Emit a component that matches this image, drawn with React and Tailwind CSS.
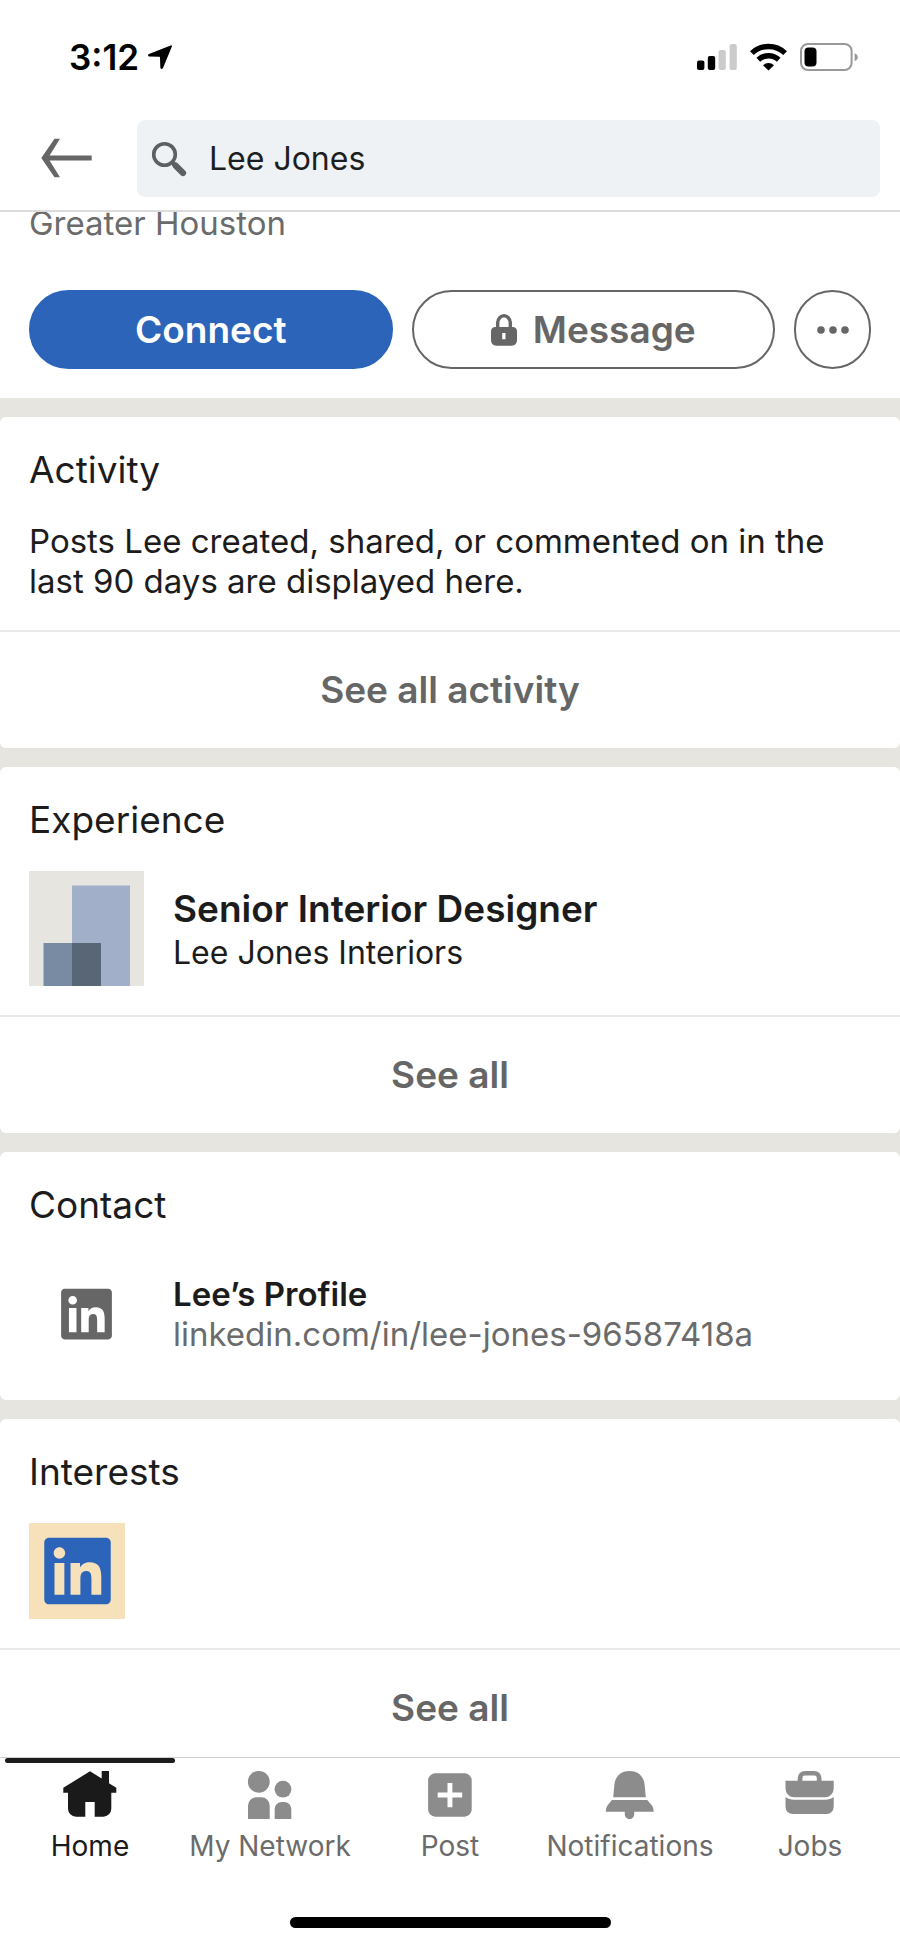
import React, { useState } from 'react';
import { FaLinkedin } from 'react-icons/fa';

const StatusBar = () => (
  <div className="h-[114px] flex items-center justify-between pl-[69px] pr-[42px] text-black">
    <div className="flex items-center gap-[9px]">
      <span className="text-[35px] leading-10 font-semibold">3:12</span>
      <svg className="w-6 h-6" viewBox="0 0 24 24" fill="currentColor">
        <path d="M22.6 0.4C23.6 0 24.3 0.8 23.8 1.8L15 23C14.4 24.4 12.4 24.2 12.3 22.6L12 12.4Q12 11.7 11.3 11.7L1.5 11.4C-0.2 11.3-0.5 9.5 1 8.9Z" />
      </svg>
    </div>
    <div className="flex items-center">
      <svg className="w-10 h-7" viewBox="0 0 40 28">
        <rect x="0" y="17.5" width="7.4" height="9.5" rx="2" />
        <rect x="10.8" y="13" width="7.4" height="14" rx="2" />
        <rect x="21.6" y="7" width="7.2" height="20" rx="2" fill="#cbcbcb" />
        <rect x="32.6" y="1" width="7.2" height="26" rx="2" fill="#cbcbcb" />
      </svg>
      <svg className="w-[37px] h-7 ml-[13px]" viewBox="0 0 37 28">
        <g fill="none" stroke="#000" strokeWidth="5.4">
          <path d="M1.9 10.1A24 24 0 0 1 35.1 10.1" />
          <path d="M8.3 16.7A15 15 0 0 1 28.7 16.7" />
        </g>
        <path d="M18.5 27.6L13 22.2A8 8 0 0 1 24 22.2Z" />
      </svg>
      <svg className="w-[58px] h-7 ml-[13px]" viewBox="0 0 58 28">
        <rect x="1" y="1" width="50.6" height="26" rx="7" fill="none" stroke="#999" strokeWidth="2" />
        <rect x="4.5" y="4.5" width="12" height="19" rx="4" />
        <path d="M54.6 10.3C58.8 11.5 58.8 17 54.6 18Z" fill="#999" />
      </svg>
    </div>
  </div>
);

const Header = () => {
  const [query, setQuery] = useState('Lee Jones');

  return (
    <header className="border-b-2 border-[#dcdcdc] bg-white">
      <StatusBar />
      <div className="flex items-center pt-[6px] pb-[13px] pl-[41px] pr-5">
        <button type="button" aria-label="Back" className="mr-[45px] text-[#666]">
          <svg className="w-[51px] h-[42px]" viewBox="0 0 51 42" fill="currentColor">
            <path d="M13.5 0.7H19L8.6 17.5H50.7V22.4H8.6L19 39.2H13.5L0.3 20Z" />
          </svg>
        </button>
        <div className="flex-1 h-[77px] flex items-center bg-[#eef2f5] rounded-lg pl-[14px]">
          <svg className="w-9 h-9 shrink-0" viewBox="0 0 36 36" fill="none" stroke="#5c6063">
            <circle cx="13.5" cy="13.5" r="10.8" strokeWidth="3.6" />
            <path d="M21.5 21.5L24 24" strokeWidth="4" />
            <path d="M24.5 24.5L32 32" strokeWidth="6.2" strokeLinecap="round" />
          </svg>
          <input
            type="text"
            aria-label="Search"
            value={query}
            onChange={(e) => setQuery(e.target.value)}
            className="flex-1 min-w-0 ml-[22px] bg-transparent text-[32px] leading-10 text-[#1c1f21] outline-none"
          />
        </div>
      </div>
    </header>
  );
};

const Card = ({ title, action, children }) => (
  <section className="bg-white rounded-md mt-[19px]">
    <div className="p-[29px]">
      <h2 className="text-[37px] leading-[48px] mb-[27px]">{title}</h2>
      {children}
    </div>
    {action && (
      <button
        type="button"
        className="w-full h-[118px] border-t-2 border-[#e9e9e9] text-[37px] leading-[48px] font-semibold text-[#666]"
      >
        {action}
      </button>
    )}
  </section>
);

const HomeIcon = () => (
  <path d="M29 5.3L40.7 12.6V5H48V17.2L55.3 21.8V26.8H50.3V42.7A8 8 0 0 1 42.3 50.7H33.7V36H24.3V50.7H15A8 8 0 0 1 7 42.7V26.8H2.3V21.8Z" />
);

const NetworkIcon = () => (
  <>
    <circle cx="17.8" cy="15.8" r="10.9" />
    <path d="M7 53V39.5A8.2 8.2 0 0 1 15.2 31.3H20.5A8.2 8.2 0 0 1 28.7 39.5V53Z" />
    <circle cx="42" cy="23.2" r="8.4" />
    <path d="M33.7 53V43A7 7 0 0 1 40.7 36H43.3A7 7 0 0 1 50.3 43V53Z" />
  </>
);

const PostIcon = () => (
  <path
    fillRule="evenodd"
    d="M14.3 7.3H43.5A7.2 7.2 0 0 1 50.7 14.5V43.5A7.2 7.2 0 0 1 43.5 50.7H14.3A7.2 7.2 0 0 1 7.1 43.5V14.5A7.2 7.2 0 0 1 14.3 7.3ZM26.5 17V26.6H16.7V31.6H26.5V41.2H31.4V31.6H41.2V26.6H31.4V17Z"
  />
);

const BellIcon = () => (
  <>
    <path d="M12.2 31.3L13.4 18.5C14.3 9.8 20.4 5 28.5 5S42.7 9.8 43.6 18.5L44.8 31.3Z" />
    <path d="M10.9 33.9H46.2L51 39.5Q52.7 42 52.7 45.7H33.2V48.5A4.7 4.7 0 0 1 23.8 48.5V45.7H4.7Q4.7 42 6.4 39.5Z" />
  </>
);

const JobsIcon = () => (
  <>
    <path
      fillRule="evenodd"
      d="M4.5 14.7H16.7V12.2A7.2 7.2 0 0 1 23.9 5H33.3A7.2 7.2 0 0 1 40.5 12.2V14.7H52.7V22.5A8.8 8.8 0 0 1 43.9 31.3H13.3A8.8 8.8 0 0 1 4.5 22.5ZM21.4 14.7H35.8V12A2.4 2.4 0 0 0 33.4 9.6H23.8A2.4 2.4 0 0 0 21.4 12Z"
    />
    <path d="M4.5 31C7 32.8 9.6 33.7 13 33.7H44.2C47.6 33.7 50.2 32.8 52.7 31V40.8A7.2 7.2 0 0 1 45.5 48H11.7A7.2 7.2 0 0 1 4.5 40.8Z" />
  </>
);

const tabs = [
  { label: 'Home', Icon: HomeIcon },
  { label: 'My Network', Icon: NetworkIcon },
  { label: 'Post', Icon: PostIcon },
  { label: 'Notifications', Icon: BellIcon },
  { label: 'Jobs', Icon: JobsIcon },
];

const TabBar = () => (
  <div className="h-[190px] shrink-0 flex flex-col items-center border-t border-[#cfcfcf] bg-white">
    <nav className="w-full grid grid-cols-5">
      {tabs.map(({ label, Icon }, i) => (
        <a
          key={label}
          href="#"
          aria-current={i === 0 ? 'page' : undefined}
          className={`relative flex flex-col items-center pt-2 ${i === 0 ? 'text-[#1a1a1a]' : 'text-[#8c8c8c]'}`}
        >
          {i === 0 && <span className="absolute top-0 inset-x-[5px] h-[5px] rounded-full bg-[#1c1c1c]" />}
          <svg className="w-[58px] h-[58px]" viewBox="0 0 58 58" fill="currentColor">
            <Icon />
          </svg>
          <span className={`mt-1 text-[28px] leading-9 whitespace-nowrap ${i === 0 ? '' : 'text-[#6b6b6b]'}`}>{label}</span>
        </a>
      ))}
    </nav>
    {/* Home indicator */}
    <div className="mt-auto mb-[19px] w-[321px] h-[11px] rounded-full bg-black" />
  </div>
);

const App = () => {
  return (
    <div className="h-screen flex flex-col bg-[#e7e5df] text-[#1c1c1c] font-['Inter','Liberation_Sans',sans-serif]">
      <Header />

      <main className="flex-1 min-h-0 overflow-y-auto [scrollbar-width:none]">
        {/* Profile summary, scrolled under the header */}
        <div className="-mt-[9px] px-[29px] pb-[29px] bg-white">
          <p className="text-[33px] leading-10 text-[#6b6b6b]">Greater Houston</p>
          <div className="flex gap-[19px] mt-[47px]">
            <button
              type="button"
              className="flex-1 h-[79px] rounded-full border-2 border-[#2b64b9] bg-[#2b64b9] text-white text-[37px] leading-[48px] font-semibold"
            >
              Connect
            </button>
            <button
              type="button"
              className="flex-1 h-[79px] rounded-full border-2 border-[#666] text-[#666] text-[37px] leading-[48px] font-semibold flex items-center justify-center gap-4"
            >
              <svg className="w-[26px] h-8" viewBox="0 0 26 32">
                <path d="M6.7 14V8.6A6.3 6.8 0 0 1 19.3 8.6V14" fill="none" stroke="currentColor" strokeWidth="3.4" />
                <path
                  fill="currentColor"
                  fillRule="evenodd"
                  d="M4.5 13H21.5Q26 13 26 17.5V26Q26 31.7 20.5 31.7H5.5Q0 31.7 0 26V17.5Q0 13 4.5 13ZM11.2 19V25.3H14.5V19Z"
                />
              </svg>
              Message
            </button>
            <button type="button" aria-label="More" className="w-[77px] h-[79px] rounded-full border-2 border-[#666] text-[#666] flex items-center justify-center">
              <svg className="w-8 h-2" viewBox="0 0 32 8" fill="currentColor">
                <circle cx="4" cy="4" r="3.8" />
                <circle cx="16" cy="4" r="3.8" />
                <circle cx="28" cy="4" r="3.8" />
              </svg>
            </button>
          </div>
        </div>

        <Card title="Activity" action="See all activity">
          <p className="text-[33px] leading-10">
            Posts Lee created, shared, or commented on in the last 90 days are displayed here.
          </p>
        </Card>

        <Card title="Experience" action="See all">
          <div className="flex items-center gap-[29px]">
            <svg className="w-[115px] h-[115px] bg-[#e7e5df]" viewBox="0 0 115 115">
              <rect x="43" y="14.5" width="58" height="100.5" fill="#a1b0c8" />
              <rect x="14.5" y="72" width="57.5" height="43" fill="#788ba3" />
              <rect x="43" y="72" width="29" height="43" fill="#586676" />
            </svg>
            <div>
              <h3 className="text-[37px] leading-[48px] font-semibold">Senior Interior Designer</h3>
              <p className="text-[32px] leading-10">Lee Jones Interiors</p>
            </div>
          </div>
        </Card>

        <Card title="Contact">
          <div className="flex items-center gap-[29px]">
            <div className="w-[115px] h-[115px] flex items-center justify-center text-[#666]">
              <FaLinkedin className="w-[51px] h-[58px]" />
            </div>
            <div>
              <h3 className="text-[33px] leading-10 font-semibold">Lee’s Profile</h3>
              <a href="#" className="block text-[33px] leading-10 text-[#6b6b6b]">linkedin.com/in/lee-jones-96587418a</a>
            </div>
          </div>
        </Card>

        <Card title="Interests" action="See all">
          <div className="w-24 h-24 flex items-center justify-center bg-[#f6e1bb] text-[#2b64b9]">
            <FaLinkedin className="w-[67px] h-[76px]" />
          </div>
        </Card>
      </main>

      <TabBar />
    </div>
  );
};

export default App;
